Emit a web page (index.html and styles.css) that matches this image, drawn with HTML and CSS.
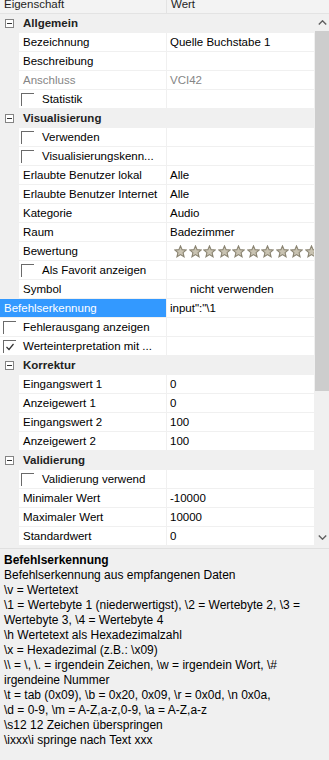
FILE: index.html
```html
<!DOCTYPE html>
<html>
<head>
    <meta charset="utf-8">
    <title>Eigenschaften</title>
    <link rel="stylesheet" href="styles.css">
</head>
<body>
    <svg class="defs" width="0" height="0">
        <symbol id="star" viewBox="0 0 12 12">
            <polygon points="6,0.8 7.5,4.3 11.3,4.6 8.4,7.1 9.3,10.9 6,8.9 2.7,10.9 3.6,7.1 0.7,4.6 4.5,4.3" fill="#c9c3b2" stroke="#8a8472" stroke-width="1"/>
        </symbol>
        <symbol id="minus" viewBox="0 0 9 9">
            <rect x="0.5" y="0.5" width="8" height="8" fill="#fff" stroke="#848484"/>
            <line x1="2" y1="4.5" x2="7" y2="4.5" stroke="#333"/>
        </symbol>
    </svg>

    <div class="header">
        <div class="hcol hname">Eigenschaft</div>
        <div class="hcol">Wert</div>
    </div>

    <div class="grid-wrap">
        <div class="grid">
            <!-- Allgemein -->
            <div class="row cat"><svg class="expander"><use href="#minus"/></svg>Allgemein</div>
            <div class="row"><div class="gutter"></div><div class="name">Bezeichnung</div><div class="value">Quelle Buchstabe 1</div></div>
            <div class="row"><div class="gutter"></div><div class="name">Beschreibung</div><div class="value"></div></div>
            <div class="row disabled"><div class="gutter"></div><div class="name">Anschluss</div><div class="value">VCI42</div></div>
            <div class="row"><div class="gutter"></div><div class="name check"><span class="cb"></span>Statistik</div><div class="value"></div></div>

            <!-- Visualisierung -->
            <div class="row cat"><svg class="expander"><use href="#minus"/></svg>Visualisierung</div>
            <div class="row"><div class="gutter"></div><div class="name check"><span class="cb"></span>Verwenden</div><div class="value"></div></div>
            <div class="row"><div class="gutter"></div><div class="name check"><span class="cb"></span>Visualisierungskenn...</div><div class="value"></div></div>
            <div class="row"><div class="gutter"></div><div class="name">Erlaubte Benutzer lokal</div><div class="value">Alle</div></div>
            <div class="row"><div class="gutter"></div><div class="name">Erlaubte Benutzer Internet</div><div class="value">Alle</div></div>
            <div class="row"><div class="gutter"></div><div class="name">Kategorie</div><div class="value">Audio</div></div>
            <div class="row"><div class="gutter"></div><div class="name">Raum</div><div class="value">Badezimmer</div></div>
            <div class="row"><div class="gutter"></div><div class="name">Bewertung</div>
                <div class="value stars">
                    <svg class="star"><use href="#star"/></svg>
                    <svg class="star"><use href="#star"/></svg>
                    <svg class="star"><use href="#star"/></svg>
                    <svg class="star"><use href="#star"/></svg>
                    <svg class="star"><use href="#star"/></svg>
                    <svg class="star"><use href="#star"/></svg>
                    <svg class="star"><use href="#star"/></svg>
                    <svg class="star"><use href="#star"/></svg>
                    <svg class="star"><use href="#star"/></svg>
                    <svg class="star"><use href="#star"/></svg>
                </div>
            </div>
            <div class="row"><div class="gutter"></div><div class="name check"><span class="cb"></span>Als Favorit anzeigen</div><div class="value"></div></div>
            <div class="row"><div class="gutter"></div><div class="name">Symbol</div><div class="value indent">nicht verwenden</div></div>
            <div class="row"><div class="name selected">Befehlserkennung</div><div class="value">input":"\1</div></div>
            <div class="row"><div class="name flat"><span class="cb"></span>Fehlerausgang anzeigen</div><div class="value"></div></div>
            <div class="row"><div class="name flat"><span class="cb"><svg class="tick" viewBox="0 0 12 12"><polyline points="2.5,6 5,8.5 9.5,3" fill="none" stroke="#333" stroke-width="1.2"/></svg></span>Werteinterpretation mit ...</div><div class="value"></div></div>

            <!-- Korrektur -->
            <div class="row cat"><svg class="expander"><use href="#minus"/></svg>Korrektur</div>
            <div class="row"><div class="gutter"></div><div class="name">Eingangswert 1</div><div class="value">0</div></div>
            <div class="row"><div class="gutter"></div><div class="name">Anzeigewert 1</div><div class="value">0</div></div>
            <div class="row"><div class="gutter"></div><div class="name">Eingangswert 2</div><div class="value">100</div></div>
            <div class="row"><div class="gutter"></div><div class="name">Anzeigewert 2</div><div class="value">100</div></div>

            <!-- Validierung -->
            <div class="row cat"><svg class="expander"><use href="#minus"/></svg>Validierung</div>
            <div class="row"><div class="gutter"></div><div class="name check"><span class="cb"></span>Validierung verwend</div><div class="value"></div></div>
            <div class="row"><div class="gutter"></div><div class="name">Minimaler Wert</div><div class="value">-10000</div></div>
            <div class="row"><div class="gutter"></div><div class="name">Maximaler Wert</div><div class="value">10000</div></div>
            <div class="row"><div class="gutter"></div><div class="name">Standardwert</div><div class="value">0</div></div>
        </div>

        <div class="scrollbar">
            <div class="sb-btn"><svg class="arrow" viewBox="0 0 9 5"><polyline points="0.8,4.5 4.5,0.8 8.2,4.5" fill="none" stroke="#606060" stroke-width="1.4"/></svg></div>
            <div class="sb-track"><div class="sb-thumb"></div></div>
            <div class="sb-btn"><svg class="arrow" viewBox="0 0 9 5"><polyline points="0.8,0.5 4.5,4.2 8.2,0.5" fill="none" stroke="#606060" stroke-width="1.4"/></svg></div>
        </div>
    </div>

    <div class="desc">
        <div class="desc-title">Befehlserkennung</div>
        <div class="desc-text">
            Befehlserkennung aus empfangenen Daten<br>
            \v = Wertetext<br>
            \1 = Wertebyte 1 (niederwertigst), \2 = Wertebyte 2, \3 =<br>
            Wertebyte 3, \4 = Wertebyte 4<br>
            \h Wertetext als Hexadezimalzahl<br>
            \x = Hexadezimal (z.B.: \x09)<br>
            \\ = \, \. = irgendein Zeichen, \w = irgendein Wort, \#<br>
            irgendeine Nummer<br>
            \t = tab (0x09), \b = 0x20, 0x09, \r = 0x0d, \n 0x0a,<br>
            \d = 0-9, \m = A-Z,a-z,0-9, \a = A-Z,a-z<br>
            \s12 12 Zeichen überspringen<br>
            \ixxx\i springe nach Text xxx
        </div>
    </div>
</body>
</html>
```
FILE: styles.css
```css
body {
    margin: 0;
    width: 329px;
    height: 760px;
    overflow: hidden;
    font-family: "Liberation Sans", Arial, sans-serif;
    font-size: 11.5px;
    color: #000;
    background: #f0f0f0;
}
.defs {
    display: block;
    width: 0;
    height: 0;
}
.header {
    display: flex;
    height: 13px;
    border-bottom: 1px solid #e3e3e3;
    background: #f3f3f3;
    overflow: hidden;
}
.hcol {
    padding-left: 4px;
    line-height: 8px;
    color: #1e1e1e;
}
.hname {
    width: 162px;
    border-right: 1px solid #e3e3e3;
}
.grid-wrap {
    display: flex;
    height: 532px;
}
.grid {
    width: 314px;
    background: #fff;
}
.row {
    display: flex;
    height: 18px;
    line-height: 18px;
    border-bottom: 1px solid #f0f0f0;
    white-space: nowrap;
}
.gutter {
    flex: none;
    width: 19px;
    background: #f0f0f0;
}
.name {
    flex: none;
    width: 143px;
    padding-left: 4px;
    overflow: hidden;
}
.name.check {
    display: flex;
    align-items: center;
    width: 145px;
    padding-left: 2px;
}
.name.flat {
    display: flex;
    align-items: center;
    width: 163px;
    padding-left: 3px;
}
.name.selected {
    width: 162px;
    background: #3399ff;
    color: #fff;
}
.value {
    flex: 1;
    padding-left: 3px;
    border-left: 1px solid #f0f0f0;
    overflow: hidden;
}
.value.indent {
    padding-left: 23px;
}
.disabled .name,
.disabled .value {
    color: #858585;
}
.cat {
    align-items: center;
    background: #f0f0f0;
    font-weight: bold;
    color: #222;
}
.expander {
    width: 9px;
    height: 9px;
    margin: 0 9px 0 5px;
}
.cb {
    flex: none;
    display: flex;
    width: 12px;
    height: 12px;
    margin-right: 8px;
    border-top: 1px solid #6a6a6a;
    border-left: 1px solid #6a6a6a;
}
.name.flat .cb {
    margin-right: 7px;
}
.tick {
    width: 12px;
    height: 12px;
}
.stars {
    display: flex;
    align-items: center;
    gap: 1.5px;
    padding-left: 7px;
}
.star {
    flex: none;
    width: 13px;
    height: 13px;
}
.scrollbar {
    display: flex;
    flex-direction: column;
    width: 15px;
    background: #f0f0f0;
}
.sb-btn {
    display: flex;
    align-items: center;
    justify-content: center;
    height: 17px;
    padding-left: 1px;
}
.arrow {
    width: 9px;
    height: 5px;
}
.sb-track {
    flex: 1;
}
.sb-thumb {
    height: 360px;
    margin-left: 1px;
    background: #cdcdcd;
}
.desc {
    margin-top: 2px;
    padding: 4px 4px 0;
    border-top: 1px solid #e0e0e0;
    font-size: 12px;
    line-height: 15px;
    white-space: nowrap;
}
.desc-title {
    font-weight: bold;
}
```
